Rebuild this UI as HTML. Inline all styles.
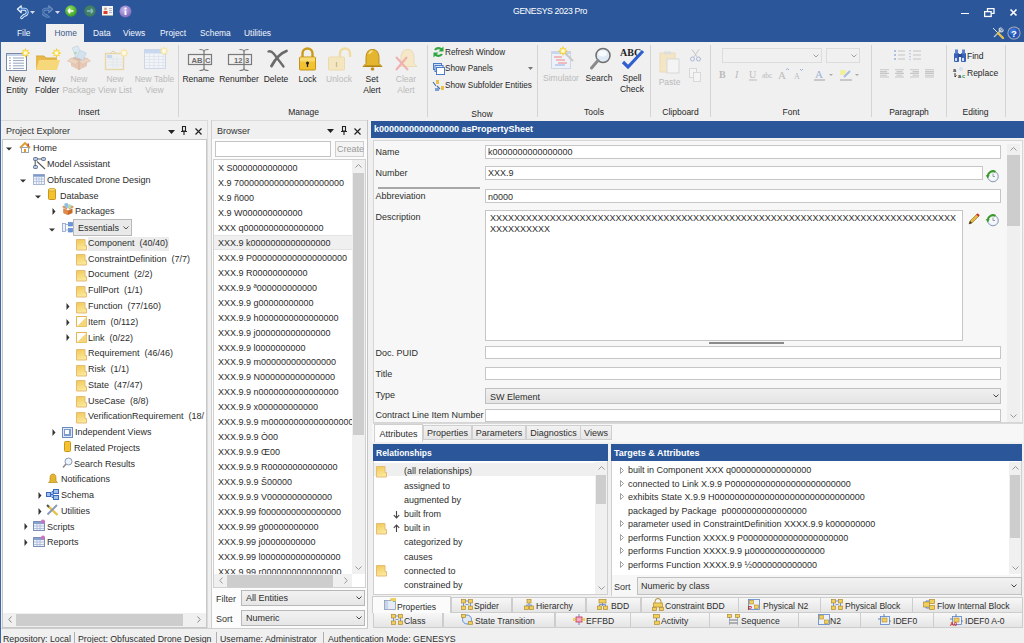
<!DOCTYPE html><html><head><meta charset='utf-8'><style>
html,body{margin:0;padding:0;}
body{width:1024px;height:643px;overflow:hidden;position:relative;background:#f0f0f0;font-family:"Liberation Sans",sans-serif;}
.t{position:absolute;white-space:nowrap;}
.b{position:absolute;}
svg.b{overflow:visible}
</style></head><body>
<div class='b' style='left:0px;top:0px;width:1024px;height:42px;background:#2b579a'></div>
<div class='t' style='left:513px;top:7.14px;font-size:8.7px;line-height:8.7px;color:#fff;letter-spacing:-0.35px'>GENESYS 2023 Pro</div>
<div class='b' style='left:961px;top:12.5px;width:7.5px;height:1.5px;background:#fff'></div>
<svg class='b' style='left:984px;top:7.5px' width='11' height='9' viewBox='0 0 11 9'><rect x='0.65' y='3.65' width='6.5' height='4.8' fill='none' stroke='#fff' stroke-width='1.3'/><path d='M3.5 3.5V0.65h6.5v4.8H7.3' fill='none' stroke='#fff' stroke-width='1.3'/></svg>
<svg class='b' style='left:1009.5px;top:8.5px' width='7' height='7' viewBox='0 0 7 7'><path d='M0.5 0.5L6.5 6.5M6.5 0.5L0.5 6.5' stroke='#fff' stroke-width='1.6'/></svg>
<svg class='b' style='left:17px;top:4.5px' width='11' height='13.5' viewBox='0 0 13 16'><path d='M3.5 5H8.5A3.6 3.6 0 0 1 8.5 12.2L5.5 15' fill='none' stroke='#e8f0fa' stroke-width='3.4' stroke-linecap='round'/><path d='M0.3 5L5 0.8V9.2Z' fill='#e8f0fa' stroke='#e8f0fa' stroke-width='1.2' stroke-linejoin='round'/><path d='M3.5 5H8.5A3.6 3.6 0 0 1 8.5 12.2L5.5 15' fill='none' stroke='#2f6fc4' stroke-width='1.5' stroke-linecap='round'/><path d='M1.6 5L4.4 2.6V7.4Z' fill='#2f6fc4'/></svg>
<svg class='b' style='left:30px;top:11px' width='5' height='3' viewBox='0 0 5 3'><path d='M0 0h5L2.5 3z' fill='#d8d8e0'/></svg>
<div class='b' style='left:42px;top:4.5px;width:11px;height:13.5px;transform:scaleX(-1);opacity:0.55'>
<svg width='11' height='13.5' viewBox='0 0 13 16' style='position:absolute;left:0;top:0'><path d='M3.5 5H8.5A3.6 3.6 0 0 1 8.5 12.2L5.5 15' fill='none' stroke='#9fb8dc' stroke-width='3.4' stroke-linecap='round'/><path d='M0.3 5L5 0.8V9.2Z' fill='#9fb8dc' stroke='#9fb8dc' stroke-width='1.2' stroke-linejoin='round'/><path d='M3.5 5H8.5A3.6 3.6 0 0 1 8.5 12.2L5.5 15' fill='none' stroke='#4a78b8' stroke-width='1.5' stroke-linecap='round'/><path d='M1.6 5L4.4 2.6V7.4Z' fill='#4a78b8'/></svg></div>
<svg class='b' style='left:55px;top:11px' width='5' height='3' viewBox='0 0 5 3'><path d='M0 0h5L2.5 3z' fill='#d8d8e0'/></svg>
<svg class='b' style='left:65px;top:5px' width='12' height='12' viewBox='0 0 12 12'><defs><radialGradient id='gg' cx='0.4' cy='0.35' r='0.7'><stop offset='0' stop-color='#9be06a'/><stop offset='1' stop-color='#2f9a1a'/></radialGradient></defs><circle cx='6' cy='6' r='5.8' fill='url(#gg)'/><path d='M3 6h5.5M3 6l2.2-2.2M3 6l2.2 2.2' stroke='#fff' stroke-width='1.5' fill='none'/></svg>
<svg class='b' style='left:84px;top:5px' width='12' height='12' viewBox='0 0 12 12'><circle cx='6' cy='6' r='5.8' fill='#3a7a5c'/><circle cx='6' cy='6' r='4.8' fill='#428266'/><path d='M3 6h5.5M9 6L6.8 3.8M9 6L6.8 8.2' stroke='#8fb8c8' stroke-width='1.3' fill='none'/></svg>
<svg class='b' style='left:102px;top:6px' width='11' height='10' viewBox='0 0 11 10'><rect x='0' y='0' width='11' height='10' fill='#f4f4f4'/><rect x='0' y='9' width='11' height='1' fill='#9aa'/><circle cx='3.5' cy='3' r='1.4' fill='#c8a080'/><rect x='1.5' y='5' width='4' height='3' fill='#e03a2a'/><path d='M7 2.5h3M7 4.5h3M7 6.5h3' stroke='#99a' stroke-width='0.7'/></svg>
<svg class='b' style='left:119px;top:5px' width='13' height='13' viewBox='0 0 13 13'><defs><radialGradient id='pg' cx='0.4' cy='0.35' r='0.7'><stop offset='0' stop-color='#c8b8ec'/><stop offset='1' stop-color='#7a64b8'/></radialGradient></defs><circle cx='6.5' cy='6.5' r='6' fill='url(#pg)'/><path d='M6.5 5.5v4.5' stroke='#fff' stroke-width='1.8'/><circle cx='6.5' cy='3.6' r='1.1' fill='#fff'/></svg>
<div class='b' style='left:46px;top:24px;width:38px;height:19px;background:#f0f0f0'></div>
<div class='t' style='left:17px;top:29.19px;font-size:8.4px;line-height:8.4px;color:#f4f6fa;'>File</div>
<div class='t' style='left:54.5px;top:29.19px;font-size:8.4px;line-height:8.4px;color:#3a5888;'>Home</div>
<div class='t' style='left:93px;top:29.19px;font-size:8.4px;line-height:8.4px;color:#f4f6fa;'>Data</div>
<div class='t' style='left:123px;top:29.19px;font-size:8.4px;line-height:8.4px;color:#f4f6fa;'>Views</div>
<div class='t' style='left:160px;top:29.19px;font-size:8.4px;line-height:8.4px;color:#f4f6fa;'>Project</div>
<div class='t' style='left:200px;top:29.19px;font-size:8.4px;line-height:8.4px;color:#f4f6fa;'>Schema</div>
<div class='t' style='left:244px;top:29.19px;font-size:8.4px;line-height:8.4px;color:#f4f6fa;'>Utilities</div>
<svg class='b' style='left:992px;top:27px' width='12' height='12' viewBox='0 0 12 12'><path d='M10.5 1.5L2 10' stroke='#b8c0cc' stroke-width='1.4'/><path d='M9.5 0.8a2 2 0 1 0 1.7 1.7' fill='none' stroke='#c8d0dc' stroke-width='1.3'/><path d='M1 1L5.5 5.5' stroke='#dfe6ee' stroke-width='1'/><path d='M6 6L11 11' stroke='#e8c24a' stroke-width='2.4' stroke-linecap='round'/></svg>
<svg class='b' style='left:1007px;top:26px' width='14' height='14' viewBox='0 0 14 14'><circle cx='7' cy='7' r='6.6' fill='#a6a9b3'/><circle cx='7' cy='7' r='5.6' fill='#2356b8'/><circle cx='6' cy='5.5' r='3.3' fill='#4d86e0' opacity='0.6'/><text x='7' y='10.6' font-size='9.5' font-weight='bold' text-anchor='middle' fill='#fff' font-family='Liberation Sans'>?</text></svg>
<div class='b' style='left:1px;top:42px;width:1023px;height:79px;background:#f0f0f0'></div>
<div class='b' style='left:0px;top:42px;width:1px;height:79px;background:#3d67ab'></div>
<div class='b' style='left:178px;top:45px;width:1px;height:72px;background:#d4d4d4'></div>
<div class='b' style='left:427px;top:45px;width:1px;height:72px;background:#d4d4d4'></div>
<div class='b' style='left:537px;top:45px;width:1px;height:72px;background:#d4d4d4'></div>
<div class='b' style='left:650px;top:45px;width:1px;height:72px;background:#d4d4d4'></div>
<div class='b' style='left:710px;top:45px;width:1px;height:72px;background:#d4d4d4'></div>
<div class='b' style='left:871px;top:45px;width:1px;height:72px;background:#d4d4d4'></div>
<div class='b' style='left:946px;top:45px;width:1px;height:72px;background:#d4d4d4'></div>
<div class='b' style='left:1005px;top:45px;width:1px;height:72px;background:#d4d4d4'></div>
<div class='t' style='left:29.00px;width:120px;text-align:center;top:108.30px;font-size:8.5px;line-height:8.5px;color:#262626;'>Insert</div>
<div class='t' style='left:243.50px;width:120px;text-align:center;top:108.30px;font-size:8.5px;line-height:8.5px;color:#262626;'>Manage</div>
<div class='t' style='left:422.00px;width:120px;text-align:center;top:110.30px;font-size:8.5px;line-height:8.5px;color:#262626;'>Show</div>
<div class='t' style='left:534.00px;width:120px;text-align:center;top:108.30px;font-size:8.5px;line-height:8.5px;color:#262626;'>Tools</div>
<div class='t' style='left:620.50px;width:120px;text-align:center;top:108.30px;font-size:8.5px;line-height:8.5px;color:#262626;'>Clipboard</div>
<div class='t' style='left:731.00px;width:120px;text-align:center;top:108.30px;font-size:8.5px;line-height:8.5px;color:#262626;'>Font</div>
<div class='t' style='left:849.00px;width:120px;text-align:center;top:108.30px;font-size:8.5px;line-height:8.5px;color:#262626;'>Paragraph</div>
<div class='t' style='left:915.50px;width:120px;text-align:center;top:108.30px;font-size:8.5px;line-height:8.5px;color:#262626;'>Editing</div>
<div class='t' style='left:-43.00px;width:120px;text-align:center;top:74.80px;font-size:8.5px;line-height:8.5px;color:#262626;'>New</div>
<div class='t' style='left:-43.00px;width:120px;text-align:center;top:85.80px;font-size:8.5px;line-height:8.5px;color:#262626;'>Entity</div>
<div class='t' style='left:-13.00px;width:120px;text-align:center;top:74.80px;font-size:8.5px;line-height:8.5px;color:#262626;'>New</div>
<div class='t' style='left:-13.00px;width:120px;text-align:center;top:85.80px;font-size:8.5px;line-height:8.5px;color:#262626;'>Folder</div>
<div class='t' style='left:19.00px;width:120px;text-align:center;top:74.80px;font-size:8.5px;line-height:8.5px;color:#bababa;'>New</div>
<div class='t' style='left:19.00px;width:120px;text-align:center;top:85.80px;font-size:8.5px;line-height:8.5px;color:#bababa;'>Package</div>
<div class='t' style='left:55.00px;width:120px;text-align:center;top:74.80px;font-size:8.5px;line-height:8.5px;color:#bababa;'>New</div>
<div class='t' style='left:55.00px;width:120px;text-align:center;top:85.80px;font-size:8.5px;line-height:8.5px;color:#bababa;'>View List</div>
<div class='t' style='left:94.50px;width:120px;text-align:center;top:74.80px;font-size:8.5px;line-height:8.5px;color:#bababa;'>New Table</div>
<div class='t' style='left:94.50px;width:120px;text-align:center;top:85.80px;font-size:8.5px;line-height:8.5px;color:#bababa;'>View</div>
<div class='t' style='left:138.50px;width:120px;text-align:center;top:74.80px;font-size:8.5px;line-height:8.5px;color:#262626;'>Rename</div>
<div class='t' style='left:179.00px;width:120px;text-align:center;top:74.80px;font-size:8.5px;line-height:8.5px;color:#262626;'>Renumber</div>
<div class='t' style='left:216.00px;width:120px;text-align:center;top:74.80px;font-size:8.5px;line-height:8.5px;color:#262626;'>Delete</div>
<div class='t' style='left:247.50px;width:120px;text-align:center;top:74.80px;font-size:8.5px;line-height:8.5px;color:#262626;'>Lock</div>
<div class='t' style='left:279.00px;width:120px;text-align:center;top:74.80px;font-size:8.5px;line-height:8.5px;color:#bababa;'>Unlock</div>
<div class='t' style='left:312.00px;width:120px;text-align:center;top:74.80px;font-size:8.5px;line-height:8.5px;color:#262626;'>Set</div>
<div class='t' style='left:312.00px;width:120px;text-align:center;top:85.80px;font-size:8.5px;line-height:8.5px;color:#262626;'>Alert</div>
<div class='t' style='left:346.00px;width:120px;text-align:center;top:74.80px;font-size:8.5px;line-height:8.5px;color:#bababa;'>Clear</div>
<div class='t' style='left:346.00px;width:120px;text-align:center;top:85.80px;font-size:8.5px;line-height:8.5px;color:#bababa;'>Alert</div>
<div class='t' style='left:501.00px;width:120px;text-align:center;top:73.60px;font-size:8.5px;line-height:8.5px;color:#bababa;'>Simulator</div>
<div class='t' style='left:539.00px;width:120px;text-align:center;top:73.60px;font-size:8.5px;line-height:8.5px;color:#262626;'>Search</div>
<div class='t' style='left:572.00px;width:120px;text-align:center;top:73.60px;font-size:8.5px;line-height:8.5px;color:#262626;'>Spell</div>
<div class='t' style='left:572.00px;width:120px;text-align:center;top:84.60px;font-size:8.5px;line-height:8.5px;color:#262626;'>Check</div>
<div class='t' style='left:609.50px;width:120px;text-align:center;top:77.50px;font-size:8.5px;line-height:8.5px;color:#bababa;'>Paste</div>
<div class='t' style='left:445px;top:48.56px;font-size:8.2px;line-height:8.2px;color:#262626;'>Refresh Window</div>
<div class='t' style='left:445px;top:65.06px;font-size:8.2px;line-height:8.2px;color:#262626;'>Show Panels</div>
<div class='t' style='left:445px;top:81.56px;font-size:8.2px;line-height:8.2px;color:#262626;'>Show Subfolder Entities</div>
<svg class='b' style='left:528px;top:67px' width='5' height='3' viewBox='0 0 5 3'><path d='M0 0h5L2.5 3z' fill='#777'/></svg>
<div class='t' style='left:967px;top:51.80px;font-size:8.5px;line-height:8.5px;color:#262626;'>Find</div>
<div class='t' style='left:967px;top:68.80px;font-size:8.5px;line-height:8.5px;color:#262626;'>Replace</div>
<svg class='b' style='left:5px;top:47px' width='24' height='26' viewBox='0 0 24 26'><rect x='1.5' y='6.5' width='20' height='17' fill='#fff' stroke='#7a8aa8'/><rect x='2' y='7' width='19' height='2' fill='#c6d3e8'/><path d='M4 11.0h2M8 11.0h11' stroke='#8a9bb8' stroke-width='0.9'/><path d='M4 13.6h2M8 13.6h11' stroke='#8a9bb8' stroke-width='0.9'/><path d='M4 16.2h2M8 16.2h11' stroke='#8a9bb8' stroke-width='0.9'/><path d='M4 18.8h2M8 18.8h11' stroke='#8a9bb8' stroke-width='0.9'/><path d='M4 21.4h2M8 21.4h11' stroke='#8a9bb8' stroke-width='0.9'/><g transform='translate(20.5,6)'><path d='M0 -5L1.2 -2.2L3.5 -3.5L2.2 -1.2L5 0L2.2 1.2L3.5 3.5L1.2 2.2L0 5L-1.2 2.2L-3.5 3.5L-2.2 1.2L-5 0L-2.2 -1.2L-3.5 -3.5L-1.2 -2.2Z' fill='#f3c81a'/><circle r='2.8' fill='#fbe36a'/><circle r='1.7' fill='#fffbe0'/></g></svg>
<svg class='b' style='left:35px;top:47px' width='26' height='26' viewBox='0 0 26 26'><path d='M1 9h8l2 2h11v12H1Z' fill='#e8b94a'/><path d='M1 23L4 13h21l-3 10Z' fill='#f6d77a'/><path d='M1 9h8l2 2h11' fill='none' stroke='#d9a83a'/><g transform='translate(21.5,6)'><path d='M0 -5L1.2 -2.2L3.5 -3.5L2.2 -1.2L5 0L2.2 1.2L3.5 3.5L1.2 2.2L0 5L-1.2 2.2L-3.5 3.5L-2.2 1.2L-5 0L-2.2 -1.2L-3.5 -3.5L-1.2 -2.2Z' fill='#f3c81a'/><circle r='2.8' fill='#fbe36a'/><circle r='1.7' fill='#fffbe0'/></g></svg>
<svg class='b' style='left:67px;top:47px' width='24' height='24' viewBox='0 0 24 24'><path d='M4 11l8 3 8-3v8l-8 4-8-4Z' fill='#e6c8b4'/><path d='M12 14v9' stroke='#d6b09a'/><path d='M4 11L0.5 14l8 3.5L12 14ZM20 11l3.5 3-8 3.5L12 14Z' fill='#ecd4c2' stroke='#dcbca8' stroke-width='0.6'/><path d='M5 11l7-3 7 3-7 3Z' fill='#d8b8a0'/><rect x='7' y='-0.5' width='6' height='11' fill='#dce8f2' stroke='#c0d0e0' stroke-width='0.6' transform='rotate(-20 10 5)'/><rect x='11' y='4' width='7' height='8' fill='#d4e2ee' stroke='#c0d0e0' stroke-width='0.6' transform='rotate(25 14 8)'/><circle cx='8.5' cy='6' r='1.2' fill='#a8d8a0'/></svg>
<svg class='b' style='left:104px;top:47px' width='24' height='24' viewBox='0 0 24 24'><rect x='1.5' y='6.5' width='18' height='16' fill='#eef0f2' stroke='#e6d6a8' stroke-width='1.4'/><path d='M4 12h14M4 15h14M4 18h14M9 9v12M13 9v12' stroke='#dfe4ea' stroke-width='0.8'/><rect x='3' y='8' width='5' height='3' fill='#c8d8ec'/><path d='M6 7l3-3 3 2' fill='none' stroke='#e0d0a0'/><g transform='translate(20,6)'><path d='M0 -5L1.2 -2.2L3.5 -3.5L2.2 -1.2L5 0L2.2 1.2L3.5 3.5L1.2 2.2L0 5L-1.2 2.2L-3.5 3.5L-2.2 1.2L-5 0L-2.2 -1.2L-3.5 -3.5L-1.2 -2.2Z' fill='#f6e09a'/><circle r='2.8' fill='#faeeb8'/><circle r='1.7' fill='#fffdf0'/></g></svg>
<svg class='b' style='left:143px;top:47px' width='25' height='24' viewBox='0 0 25 24'><rect x='1.5' y='2.5' width='21' height='19' fill='#f2f4f8' stroke='#cdd6e6'/><rect x='2' y='3' width='20' height='3.5' fill='#c8d8f0'/><path d='M2 9.5h20' stroke='#dde3ec' stroke-width='0.8'/><path d='M2 12.5h20' stroke='#dde3ec' stroke-width='0.8'/><path d='M2 15.5h20' stroke='#dde3ec' stroke-width='0.8'/><path d='M2 18.5h20' stroke='#dde3ec' stroke-width='0.8'/><path d='M6.5 6.5v15' stroke='#dde3ec' stroke-width='0.8'/><path d='M11.0 6.5v15' stroke='#dde3ec' stroke-width='0.8'/><path d='M15.5 6.5v15' stroke='#dde3ec' stroke-width='0.8'/><path d='M20.0 6.5v15' stroke='#dde3ec' stroke-width='0.8'/><g transform='translate(21,4)'><path d='M0 -5L1.2 -2.2L3.5 -3.5L2.2 -1.2L5 0L2.2 1.2L3.5 3.5L1.2 2.2L0 5L-1.2 2.2L-3.5 3.5L-2.2 1.2L-5 0L-2.2 -1.2L-3.5 -3.5L-1.2 -2.2Z' fill='#f6e09a'/><circle r='2.8' fill='#faeeb8'/><circle r='1.7' fill='#fffdf0'/></g></svg>
<svg class='b' style='left:187px;top:48px' width='26' height='24' viewBox='0 0 26 24'><rect x='1.5' y='6.5' width='23' height='10' fill='none' stroke='#7a7a7a' stroke-width='1.2'/><text x='4.5' y='14.6' font-size='7.6' font-weight='bold' fill='#6a6a6a' font-family='Liberation Sans'>AB</text><text x='18' y='14.6' font-size='7.6' font-weight='bold' fill='#6a6a6a' font-family='Liberation Sans'>C</text><path d='M17 3v18' stroke='#777' stroke-width='1.2'/><path d='M12.5 1.5Q17 1.5 17 3.5Q17 1.5 21.5 1.5M12.5 22.5Q17 22.5 17 20.5Q17 22.5 21.5 22.5' fill='none' stroke='#777' stroke-width='1.1'/></svg>
<svg class='b' style='left:227px;top:48px' width='26' height='24' viewBox='0 0 26 24'><rect x='1.5' y='6.5' width='23' height='10' fill='none' stroke='#7a7a7a' stroke-width='1.2'/><text x='7' y='14.6' font-size='7.6' font-weight='bold' fill='#6a6a6a' font-family='Liberation Sans'>12</text><text x='18' y='14.6' font-size='7.6' font-weight='bold' fill='#6a6a6a' font-family='Liberation Sans'>3</text><path d='M17 3v18' stroke='#777' stroke-width='1.2'/><path d='M12.5 1.5Q17 1.5 17 3.5Q17 1.5 21.5 1.5M12.5 22.5Q17 22.5 17 20.5Q17 22.5 21.5 22.5' fill='none' stroke='#777' stroke-width='1.1'/></svg>
<svg class='b' style='left:266px;top:48px' width='23' height='22' viewBox='0 0 23 22'><path d='M2.5 3.5Q5 2.5 8 6L17.5 18.5' fill='none' stroke='#6a6a6a' stroke-width='2.3' stroke-linecap='round'/><path d='M20.5 3Q12 6 5.5 18' fill='none' stroke='#6a6a6a' stroke-width='2.8' stroke-linecap='round'/></svg>
<svg class='b' style='left:298px;top:47px' width='19' height='24' viewBox='0 0 19 24'><path d='M4.5 11V6.5a5 5 0 0 1 10 0V11' fill='none' stroke='#c99a1c' stroke-width='2.4'/><rect x='1.5' y='10' width='16' height='13' rx='1' fill='#f2c230' stroke='#c5931a'/><rect x='2' y='10.5' width='15' height='4' fill='#f8da70'/><circle cx='9.5' cy='16' r='1.5' fill='#222'/><path d='M9.5 16v4' stroke='#222' stroke-width='1.3'/></svg>
<svg class='b' style='left:327px;top:47px' width='25' height='24' viewBox='0 0 25 24'><path d='M13 11V6.5a5 5 0 0 1 10 0V10' fill='none' stroke='#f0dca0' stroke-width='2.4'/><rect x='1.5' y='10' width='16' height='13' rx='1' fill='#f4e6c0' stroke='#eedaa8'/><path d='M9.5 15v5' stroke='#cbbb90' stroke-width='1.3'/></svg>
<svg class='b' style='left:362px;top:48px' width='21' height='23' viewBox='0 0 21 23'><path d='M10.5 1.5c-5 0-6.5 4-6.5 9v5l-3 3h19l-3-3v-5c0-5-1.5-9-6.5-9Z' fill='#e4b52e' stroke='#b98b18'/><path d='M7 6c1-2 2-3 3.5-3' stroke='#fbe79a' stroke-width='1.5' fill='none'/><path d='M3 18h15' stroke='#a67b10'/><circle cx='10.5' cy='21' r='1.8' fill='#c09020'/></svg>
<svg class='b' style='left:394px;top:48px' width='24' height='24' viewBox='0 0 24 24'><path d='M13.5 1.5c-5 0-6.5 4-6.5 9v5l-3 3h19l-3-3v-5c0-5-1.5-9-6.5-9Z' fill='#f4e8c8' stroke='#eadcb8'/><path d='M2 9l12 13M13 9L2 22' stroke='#f0b0b0' stroke-width='2'/></svg>
<svg class='b' style='left:433px;top:46px' width='11' height='12' viewBox='0 0 11 12'><path d='M9.5 4.5A4.3 4.3 0 0 0 2 4' fill='none' stroke='#2fa642' stroke-width='2.2'/><path d='M1.5 7.5A4.3 4.3 0 0 0 9 8' fill='none' stroke='#2fa642' stroke-width='2.2'/><path d='M10.5 0.5V5.5H5.5Z' fill='#2fa642'/><path d='M0.5 11.5V6.5H5.5Z' fill='#2fa642'/></svg>
<svg class='b' style='left:433px;top:63px' width='12' height='12' viewBox='0 0 12 12'><rect x='0.5' y='0.5' width='8' height='6' fill='#cfe0f6' stroke='#4a7ac8'/><rect x='2' y='2.5' width='8' height='6' fill='#dce9fa' stroke='#4a7ac8'/><rect x='3.5' y='4.5' width='8' height='7' fill='#fff' stroke='#4a7ac8'/></svg>
<svg class='b' style='left:432px;top:80px' width='13' height='12' viewBox='0 0 13 12'><path d='M1 2l3 4M5 6l3 3' stroke='#4a6fb0' stroke-width='1.2'/><rect x='4' y='0' width='3' height='4' fill='#e8c04a'/><rect x='9' y='6' width='3' height='4' fill='#e8c04a'/><rect x='3' y='8' width='4' height='3' fill='#7aa0d8'/></svg>
<svg class='b' style='left:550px;top:47px' width='25' height='24' viewBox='0 0 25 24'><rect x='1.5' y='4.5' width='19' height='17' fill='#eef2f8' stroke='#cdd6e6'/><rect x='2' y='5' width='18' height='2' fill='#c8d6ec'/><path d='M4 10h8M6 13h9M8 16h9' stroke='#f0a8a8' stroke-width='1.3'/><path d='M5 18h10' stroke='#a8c0ec' stroke-width='1.3'/><path d='M15 6l8 8' stroke='#c8c8c8' stroke-width='2'/><g transform='translate(13,4)'><path d='M0 -5L1.2 -2.2L3.5 -3.5L2.2 -1.2L5 0L2.2 1.2L3.5 3.5L1.2 2.2L0 5L-1.2 2.2L-3.5 3.5L-2.2 1.2L-5 0L-2.2 -1.2L-3.5 -3.5L-1.2 -2.2Z' fill='#f3c81a'/><circle r='2.8' fill='#fbe36a'/><circle r='1.7' fill='#fffbe0'/></g></svg>
<svg class='b' style='left:589px;top:47px' width='23' height='25' viewBox='0 0 23 25'><circle cx='14' cy='8.5' r='7' fill='#dfeaf6' stroke='#6e6e6e' stroke-width='1.5'/><ellipse cx='13.5' cy='6.5' rx='4.5' ry='3' fill='#fff' opacity='0.75'/><path d='M9 13.5L2.5 21' stroke='#8a8a8a' stroke-width='3' stroke-linecap='round'/></svg>
<svg class='b' style='left:619px;top:46px' width='26' height='25' viewBox='0 0 26 25'><text x='1' y='10' font-size='10' font-weight='bold' fill='#222' font-family='Liberation Serif'>ABC</text><path d='M4 16l5 5L24 5' fill='none' stroke='#2f5fcf' stroke-width='3.2'/></svg>
<svg class='b' style='left:659px;top:51px' width='22' height='23' viewBox='0 0 22 23'><rect x='1' y='2' width='15' height='19' fill='#f4e6c4' stroke='#ecdcb8'/><rect x='5' y='0.5' width='7' height='3' fill='#ddd'/><rect x='8' y='8' width='12' height='14' fill='#f4f4f4' stroke='#d8d8d8'/></svg>
<svg class='b' style='left:690px;top:49px' width='11' height='13' viewBox='0 0 11 13'><circle cx='2.5' cy='10' r='2' fill='none' stroke='#a8b8d8'/><circle cx='8.5' cy='10' r='2' fill='none' stroke='#a8b8d8'/><path d='M3.5 8.5L9 0.5M7.5 8.5L2 0.5' stroke='#c4c4c4'/></svg>
<svg class='b' style='left:689px;top:68px' width='13' height='14' viewBox='0 0 13 14'><rect x='0.5' y='0.5' width='7' height='9' fill='#f4f4f4' stroke='#d8d8d8'/><rect x='4.5' y='4.5' width='7' height='9' fill='#f4f4f4' stroke='#d8d8d8'/></svg>
<div class='b' style='left:722px;top:48px;width:100px;height:15px;border:1px solid #dcdcdc;box-sizing:border-box;background:#f0f0f0'></div>
<div class='b' style='left:826px;top:48px;width:34px;height:15px;border:1px solid #dcdcdc;box-sizing:border-box;background:#f0f0f0'></div>
<svg class='b' style='left:813px;top:54px' width='6' height='4' viewBox='0 0 6 4'><path d='M0.5 0.5L3 3L5.5 0.5' fill='none' stroke='#a0a0a0'/></svg>
<svg class='b' style='left:851px;top:54px' width='6' height='4' viewBox='0 0 6 4'><path d='M0.5 0.5L3 3L5.5 0.5' fill='none' stroke='#a0a0a0'/></svg>
<svg class='b' style='left:718px;top:68px' width='140' height='14' viewBox='0 0 140 14'><text x='1' y='10' font-size='10' font-weight='bold' fill='#bbb' font-family='Liberation Serif'>B</text><text x='17' y='10' font-size='10' font-style='italic' fill='#bbb' font-family='Liberation Serif'>I</text><text x='31' y='10' font-size='10' fill='#bbb' font-family='Liberation Serif'>U</text><path d='M31 12h8' stroke='#bbb'/><text x='44' y='10' font-size='7.5' fill='#bbb' font-family='Liberation Serif'>abc</text><text x='60' y='11' font-size='11' fill='#bbb' font-family='Liberation Serif'>A</text><path d='M68 2l1.5 -1.5L71 2' stroke='#9bb0d8' fill='none'/><text x='76' y='11' font-size='8' fill='#bbb' font-family='Liberation Serif'>A</text><path d='M82 1l1.5 1.5L85 1' stroke='#9bb0d8' fill='none'/><text x='97' y='10' font-size='11' fill='#9fb0d6' font-family='Liberation Serif'>A</text><rect x='96' y='11' width='11' height='2' fill='#c8c8c8'/><path d='M111 6h4l-2 2z' fill='#aaa'/><rect x='122' y='2' width='6' height='5' fill='#f0f0a0'/><path d='M126 9l6-6' stroke='#a8bce0' stroke-width='2'/><rect x='122' y='11' width='12' height='2' fill='#c8c8c8'/><path d='M137 6h4l-2 2z' fill='#aaa'/></svg>
<svg class='b' style='left:893px;top:49px' width='30' height='13' viewBox='0 0 30 13'><g fill='#9ab0dc'><circle cx='2' cy='2' r='1'/><circle cx='2' cy='6' r='1'/><circle cx='2' cy='10' r='1'/></g><path d='M5 2h7M5 6h7M5 10h7M20 2h8M20 6h8M20 10h8' stroke='#c4c4c4' stroke-width='1.2'/><path d='M17 1v10' stroke='#9ab0dc' stroke-dasharray='1.5 1.5'/></svg>
<svg class='b' style='left:879px;top:68.5px' width='58' height='10' viewBox='0 0 58 10'><path d='M1 0.8H10M1 2.6H8M1 4.4H10M1 6.2H8M1 8.0H10M16 0.8H25M17.5 2.6H23.5M16 4.4H25M17.5 6.2H23.5M16 8.0H25M31 0.8H40M33.5 2.6H40M31 4.4H40M33.5 6.2H40M31 8.0H40M46 0.8H55M46 2.6H55M46 4.4H55M46 6.2H55M46 8.0H55' stroke='#c6c6c6' stroke-width='1.1'/></svg>
<svg class='b' style='left:953px;top:49px' width='14' height='13' viewBox='0 0 14 13'><rect x='1' y='4' width='5' height='9' rx='1' fill='#3a62b8'/><rect x='8' y='4' width='5' height='9' rx='1' fill='#3a62b8'/><rect x='2' y='0.5' width='3' height='4' fill='#5a82d0'/><rect x='9' y='0.5' width='3' height='4' fill='#5a82d0'/><rect x='5' y='5' width='4' height='3' fill='#2a4a98'/><rect x='2' y='9' width='2' height='3' fill='#cfe0ff'/><rect x='9' y='9' width='2' height='3' fill='#cfe0ff'/></svg>
<svg class='b' style='left:953px;top:66px' width='14' height='13' viewBox='0 0 14 13'><text x='0' y='6' font-size='5.5' font-weight='bold' fill='#333' font-family='Liberation Sans'>a</text><path d='M2 7v4l1.5-1.5' stroke='#333' fill='none'/><text x='5' y='12' font-size='5.5' font-weight='bold' fill='#333' font-family='Liberation Sans'>a</text><text x='9' y='12' font-size='5.5' font-weight='bold' fill='#2a9a3a' font-family='Liberation Sans'>c</text><circle cx='8' cy='3' r='2' fill='#d8e0ea'/></svg>
<div class='b' style='left:0px;top:121px;width:1024px;height:510px;background:#f0f0f0'></div>
<div class='b' style='left:0px;top:121px;width:1px;height:522px;background:#3d67ab'></div>
<div class='b' style='left:1px;top:628px;width:366px;height:1.2px;background:#cfcfcf'></div>
<div class='b' style='left:1px;top:120px;width:207px;height:1px;background:#dadada'></div>
<div class='b' style='left:207px;top:120px;width:1px;height:508px;background:#dadada'></div>
<div class='b' style='left:2px;top:139px;width:205px;height:489px;background:#fff;border:1px solid #c8c8c8;box-sizing:border-box'></div>
<div class='t' style='left:6px;top:126.88px;font-size:9px;line-height:9px;color:#333;'>Project Explorer</div>
<svg class='b' style='left:168px;top:130px' width='7' height='4' viewBox='0 0 7 4'><path d='M0 0h7L3.5 4z' fill='#222'/></svg>
<svg class='b' style='left:181px;top:126px' width='6' height='9' viewBox='0 0 6 9'><path d='M1.5 0.5h3v4.5h-3z' fill='none' stroke='#222' stroke-width='1.1'/><path d='M0 5.5h6M3 5.5v3.5' stroke='#222' stroke-width='1.1'/></svg>
<svg class='b' style='left:194.5px;top:127.5px' width='7' height='7' viewBox='0 0 7 7'><path d='M0.5 0.5L6.5 6.5M6.5 0.5L0.5 6.5' stroke='#222' stroke-width='1.2'/></svg>
<svg width='0' height='0' style='position:absolute'><defs><linearGradient id='fg' x1='0' y1='0' x2='0.3' y2='1'><stop offset='0' stop-color='#f0c855'/><stop offset='1' stop-color='#fbe89a'/></linearGradient></defs></svg>
<svg class='b' style='left:6px;top:147.3px' width='6' height='4' viewBox='0 0 6 4'><path d='M0 0.5h6L3 3.5z' fill='#333'/></svg>
<svg class='b' style='left:19px;top:142px' width='12' height='11' viewBox='0 0 12 11'><path d='M1 6L6 1l5 5' fill='none' stroke='#e09a2a' stroke-width='1.8'/><rect x='2.5' y='5.5' width='7' height='5' fill='#fff' stroke='#9aa4b8'/><rect x='5' y='7' width='2' height='3.5' fill='#e09a2a'/><rect x='8.5' y='1.5' width='1.5' height='3' fill='#c44'/></svg>
<div class='t' style='left:33px;top:144.38px;font-size:9px;line-height:9px;color:#2d2d2d;'>Home</div>
<svg class='b' style='left:33px;top:157px' width='13' height='13' viewBox='0 0 13 13'><path d='M2.5 2h7M2.2 2v8M4 4.5l8 7.5' stroke='#5a5a5a' stroke-width='1.1' fill='none'/><rect x='0.5' y='0.5' width='4' height='3' rx='1' fill='#b4c6e4' stroke='#4a5a78' stroke-width='0.8'/><rect x='8.5' y='0.5' width='4' height='3' rx='1' fill='#b4c6e4' stroke='#4a5a78' stroke-width='0.8'/><rect x='0.5' y='8.5' width='4' height='3' rx='1' fill='#b4c6e4' stroke='#4a5a78' stroke-width='0.8'/></svg>
<div class='t' style='left:47px;top:160.14px;font-size:9px;line-height:9px;color:#2d2d2d;'>Model Assistant</div>
<svg class='b' style='left:20px;top:178.82000000000002px' width='6' height='4' viewBox='0 0 6 4'><path d='M0 0.5h6L3 3.5z' fill='#333'/></svg>
<svg class='b' style='left:33px;top:174px' width='12' height='11' viewBox='0 0 12 11'><rect x='0.5' y='0.5' width='11' height='10' fill='#f0f4fa' stroke='#a0b0d0' stroke-width='0.9'/><rect x='0.5' y='0.5' width='11' height='2.2' fill='#7d98cc'/><path d='M1 5h10M1 7.5h10M3.5 2.5v8M6 2.5v8M8.5 2.5v8' stroke='#a8b8d8' stroke-width='0.7'/></svg>
<div class='t' style='left:47px;top:175.90px;font-size:9px;line-height:9px;color:#2d2d2d;'>Obfuscated Drone Design</div>
<svg class='b' style='left:35px;top:194.58px' width='6' height='4' viewBox='0 0 6 4'><path d='M0 0.5h6L3 3.5z' fill='#333'/></svg>
<svg class='b' style='left:48px;top:188px' width='8' height='12' viewBox='0 0 8 12'><rect x='0.5' y='1' width='7' height='10.5' rx='1' fill='#f2c230' stroke='#c9961a'/><ellipse cx='4' cy='1.8' rx='3.5' ry='1.3' fill='#f8dc70' stroke='#c9961a' stroke-width='0.6'/></svg>
<div class='t' style='left:60px;top:191.66px;font-size:9px;line-height:9px;color:#2d2d2d;'>Database</div>
<svg class='b' style='left:52px;top:208.23999999999998px' width='4' height='7' viewBox='0 0 4 7'><path d='M0.5 0v7L3.5 3.5z' fill='#333'/></svg>
<svg class='b' style='left:62px;top:203px' width='12' height='12' viewBox='0 0 12 12'><path d='M1.5 5.5l4.5 2 4.5-2v4.5l-4.5 2-4.5-2z' fill='#c8682a'/><path d='M1.5 5.5l4.5 2v4.5l-4.5-2z' fill='#e08a4a'/><path d='M0 4l2-1.5 4 2-1.5 2z' fill='#d8905a'/><path d='M12 4l-2-1.5-4 2 1.5 2z' fill='#d8905a'/><rect x='3' y='0' width='3.5' height='5' fill='#8ac0e8' transform='rotate(-20 5 3)'/><rect x='6' y='1.5' width='3.5' height='4' fill='#b8d8b0' transform='rotate(15 8 3)'/></svg>
<div class='t' style='left:75px;top:207.42px;font-size:9px;line-height:9px;color:#2d2d2d;'>Packages</div>
<svg class='b' style='left:49px;top:227.5px' width='6' height='4' viewBox='0 0 6 4'><path d='M0 0.5h6L3 3.5z' fill='#333'/></svg>
<svg class='b' style='left:62px;top:222px' width='11' height='11' viewBox='0 0 11 11'><rect x='0.5' y='1.5' width='3' height='8' fill='#eef2f8' stroke='#8aa4d0' stroke-width='0.8'/><rect x='6.5' y='0.5' width='4' height='3.5' fill='#6a98e0' stroke='#4a78c0' stroke-width='0.6'/><rect x='6.5' y='6.5' width='4' height='3.5' fill='#6a98e0' stroke='#4a78c0' stroke-width='0.6'/><path d='M3.5 2.5h3M3.5 8h3' stroke='#8aa4d0' stroke-width='0.8'/></svg>
<div class='b' style='left:73px;top:219px;width:59px;height:17px;background:#e9e9e9;border:1px solid #b8b8b8;box-sizing:border-box'></div>
<div class='t' style='left:78px;top:224.08px;font-size:9px;line-height:9px;color:#2d2d2d;'>Essentials</div>
<svg class='b' style='left:123px;top:226px' width='6' height='4' viewBox='0 0 6 4'><path d='M0.5 0.5L3 3L5.5 0.5' fill='none' stroke='#555'/></svg>
<div class='b' style='left:88px;top:237px;width:81px;height:14px;background:#ececec'></div>
<svg class='b' style='left:76px;top:238.56px' width='11' height='12' viewBox='0 0 11 12'><path d='M0.5 0.5h8.5v6h1.5a1 1 0 0 1 0 0v4.5h-10z' fill='url(#fg)' stroke='#e6bb78'/></svg>
<div class='t' style='left:88px;top:238.94px;font-size:9px;line-height:9px;color:#2d2d2d;'>Component&nbsp;&nbsp;(40/40)</div>
<svg class='b' style='left:76px;top:254.32px' width='11' height='12' viewBox='0 0 11 12'><path d='M0.5 0.5h8.5v6h1.5a1 1 0 0 1 0 0v4.5h-10z' fill='url(#fg)' stroke='#e6bb78'/></svg>
<div class='t' style='left:88px;top:254.70px;font-size:9px;line-height:9px;color:#2d2d2d;'>ConstraintDefinition&nbsp;&nbsp;(7/7)</div>
<svg class='b' style='left:76px;top:270.08px' width='11' height='12' viewBox='0 0 11 12'><path d='M0.5 0.5h8.5v6h1.5a1 1 0 0 1 0 0v4.5h-10z' fill='url(#fg)' stroke='#e6bb78'/></svg>
<div class='t' style='left:88px;top:270.46px;font-size:9px;line-height:9px;color:#2d2d2d;'>Document&nbsp;&nbsp;(2/2)</div>
<svg class='b' style='left:76px;top:285.84000000000003px' width='11' height='12' viewBox='0 0 11 12'><path d='M0.5 0.5h8.5v6h1.5a1 1 0 0 1 0 0v4.5h-10z' fill='url(#fg)' stroke='#e6bb78'/></svg>
<div class='t' style='left:88px;top:286.22px;font-size:9px;line-height:9px;color:#2d2d2d;'>FullPort&nbsp;&nbsp;(1/1)</div>
<svg class='b' style='left:66px;top:302.8px' width='4' height='7' viewBox='0 0 4 7'><path d='M0.5 0v7L3.5 3.5z' fill='#333'/></svg>
<svg class='b' style='left:76px;top:301.6px' width='11' height='12' viewBox='0 0 11 12'><path d='M0.5 0.5h8.5v6h1.5a1 1 0 0 1 0 0v4.5h-10z' fill='url(#fg)' stroke='#e6bb78'/></svg>
<div class='t' style='left:88px;top:301.98px;font-size:9px;line-height:9px;color:#2d2d2d;'>Function&nbsp;&nbsp;(77/160)</div>
<svg class='b' style='left:66px;top:318.56px' width='4' height='7' viewBox='0 0 4 7'><path d='M0.5 0v7L3.5 3.5z' fill='#333'/></svg>
<svg class='b' style='left:76px;top:316.36px' width='11' height='11' viewBox='0 0 11 11'><path d='M0.5 0.5h10v10h-10z' fill='#fff' stroke='#e3b54a'/><path d='M1 10.5L10.5 1V10.5z' fill='#f6d67a'/></svg>
<div class='t' style='left:88px;top:317.74px;font-size:9px;line-height:9px;color:#2d2d2d;'>Item&nbsp;&nbsp;(0/112)</div>
<svg class='b' style='left:66px;top:334.32px' width='4' height='7' viewBox='0 0 4 7'><path d='M0.5 0v7L3.5 3.5z' fill='#333'/></svg>
<svg class='b' style='left:76px;top:332.12px' width='11' height='11' viewBox='0 0 11 11'><path d='M0.5 0.5h10v10h-10z' fill='#fff' stroke='#e3b54a'/><path d='M1 10.5L10.5 1V10.5z' fill='#f6d67a'/></svg>
<div class='t' style='left:88px;top:333.50px;font-size:9px;line-height:9px;color:#2d2d2d;'>Link&nbsp;&nbsp;(0/22)</div>
<svg class='b' style='left:76px;top:348.88px' width='11' height='12' viewBox='0 0 11 12'><path d='M0.5 0.5h8.5v6h1.5a1 1 0 0 1 0 0v4.5h-10z' fill='url(#fg)' stroke='#e6bb78'/></svg>
<div class='t' style='left:88px;top:349.26px;font-size:9px;line-height:9px;color:#2d2d2d;'>Requirement&nbsp;&nbsp;(46/46)</div>
<svg class='b' style='left:76px;top:364.64px' width='11' height='12' viewBox='0 0 11 12'><path d='M0.5 0.5h8.5v6h1.5a1 1 0 0 1 0 0v4.5h-10z' fill='url(#fg)' stroke='#e6bb78'/></svg>
<div class='t' style='left:88px;top:365.02px;font-size:9px;line-height:9px;color:#2d2d2d;'>Risk&nbsp;&nbsp;(1/1)</div>
<svg class='b' style='left:76px;top:380.4px' width='11' height='12' viewBox='0 0 11 12'><path d='M0.5 0.5h8.5v6h1.5a1 1 0 0 1 0 0v4.5h-10z' fill='url(#fg)' stroke='#e6bb78'/></svg>
<div class='t' style='left:88px;top:380.78px;font-size:9px;line-height:9px;color:#2d2d2d;'>State&nbsp;&nbsp;(47/47)</div>
<svg class='b' style='left:76px;top:396.15999999999997px' width='11' height='12' viewBox='0 0 11 12'><path d='M0.5 0.5h8.5v6h1.5a1 1 0 0 1 0 0v4.5h-10z' fill='url(#fg)' stroke='#e6bb78'/></svg>
<div class='t' style='left:88px;top:396.54px;font-size:9px;line-height:9px;color:#2d2d2d;'>UseCase&nbsp;&nbsp;(8/8)</div>
<svg class='b' style='left:76px;top:411.92px' width='11' height='12' viewBox='0 0 11 12'><path d='M0.5 0.5h8.5v6h1.5a1 1 0 0 1 0 0v4.5h-10z' fill='url(#fg)' stroke='#e6bb78'/></svg>
<div class='t' style='left:88px;top:412.30px;font-size:9px;line-height:9px;color:#2d2d2d;'>VerificationRequirement&nbsp;&nbsp;(18/</div>
<svg class='b' style='left:52px;top:428.88px' width='4' height='7' viewBox='0 0 4 7'><path d='M0.5 0v7L3.5 3.5z' fill='#333'/></svg>
<svg class='b' style='left:62px;top:426.68px' width='11' height='11' viewBox='0 0 11 11'><rect x='0.5' y='0.5' width='10' height='10' fill='#dfe8f6' stroke='#6a8ac0'/><rect x='2' y='2' width='7' height='7' fill='#7a9ad0'/><rect x='3' y='3' width='4' height='4' fill='#fff'/></svg>
<div class='t' style='left:75px;top:428.06px;font-size:9px;line-height:9px;color:#2d2d2d;'>Independent Views</div>
<svg class='b' style='left:64px;top:441.44px' width='7' height='11' viewBox='0 0 7 11'><rect x='0.5' y='0.5' width='6' height='10' rx='1' fill='#f2c230' stroke='#c9961a'/></svg>
<div class='t' style='left:74px;top:443.82px;font-size:9px;line-height:9px;color:#2d2d2d;'>Related Projects</div>
<svg class='b' style='left:62px;top:457.2px' width='11' height='11' viewBox='0 0 11 11'><circle cx='6.5' cy='4.5' r='3.5' fill='#eef4fc' stroke='#8a9ab8'/><path d='M4 7l-3 3.5' stroke='#8a8a8a' stroke-width='1.5'/></svg>
<div class='t' style='left:74px;top:459.58px;font-size:9px;line-height:9px;color:#2d2d2d;'>Search Results</div>
<svg class='b' style='left:48px;top:472.96px' width='10' height='11' viewBox='0 0 10 11'><path d='M5 1c-2.5 0-3 2-3 4.5v2.5l-1.5 1.5h9l-1.5-1.5v-2.5c0-2.5-.5-4.5-3-4.5z' fill='#e4b52e' stroke='#b98b18' stroke-width='0.7'/></svg>
<div class='t' style='left:61px;top:475.34px;font-size:9px;line-height:9px;color:#2d2d2d;'>Notifications</div>
<svg class='b' style='left:38px;top:491.91999999999996px' width='4' height='7' viewBox='0 0 4 7'><path d='M0.5 0v7L3.5 3.5z' fill='#333'/></svg>
<svg class='b' style='left:46px;top:488.71999999999997px' width='13' height='11' viewBox='0 0 13 11'><rect x='0.5' y='3.5' width='4' height='4' fill='#9fc0ec' stroke='#3a6ac0'/><rect x='7.5' y='0.5' width='5' height='4' fill='#9fc0ec' stroke='#3a6ac0'/><rect x='7.5' y='6.5' width='5' height='4' fill='#9fc0ec' stroke='#3a6ac0'/><path d='M4.5 5.5h3M6 2.5v6h1.5M6 2.5h1.5' stroke='#3a6ac0' fill='none'/></svg>
<div class='t' style='left:61px;top:491.10px;font-size:9px;line-height:9px;color:#2d2d2d;'>Schema</div>
<svg class='b' style='left:38px;top:507.68px' width='4' height='7' viewBox='0 0 4 7'><path d='M0.5 0v7L3.5 3.5z' fill='#333'/></svg>
<svg class='b' style='left:46px;top:504.48px' width='13' height='12' viewBox='0 0 13 12'><path d='M1.5 1.5L11.5 11' stroke='#e8c04a' stroke-width='2.4'/><path d='M11 1L1.5 10.5' stroke='#8a9ab8' stroke-width='2'/><path d='M1 1l2 2' stroke='#555' stroke-width='2'/></svg>
<div class='t' style='left:61px;top:506.86px;font-size:9px;line-height:9px;color:#2d2d2d;'>Utilities</div>
<svg class='b' style='left:24px;top:523.44px' width='4' height='7' viewBox='0 0 4 7'><path d='M0.5 0v7L3.5 3.5z' fill='#333'/></svg>
<svg class='b' style='left:33px;top:519.24px' width='12' height='12' viewBox='0 0 12 12'><rect x='0.5' y='2.5' width='11' height='9' fill='#eef2fa' stroke='#7b8fb8'/><rect x='1' y='3' width='10' height='2' fill='#8aa0cc'/><path d='M1 7h10M1 9.5h10M4 5v6M7 5v6' stroke='#9fb0d2' stroke-width='0.7'/><circle cx='10' cy='2.5' r='2' fill='#d070c0'/></svg>
<div class='t' style='left:47px;top:522.62px;font-size:9px;line-height:9px;color:#2d2d2d;'>Scripts</div>
<svg class='b' style='left:24px;top:539.2px' width='4' height='7' viewBox='0 0 4 7'><path d='M0.5 0v7L3.5 3.5z' fill='#333'/></svg>
<svg class='b' style='left:33px;top:535.0px' width='12' height='12' viewBox='0 0 12 12'><rect x='0.5' y='2.5' width='11' height='9' fill='#eef2fa' stroke='#7b8fb8'/><rect x='1' y='3' width='10' height='2' fill='#8aa0cc'/><path d='M1 7h10M1 9.5h10M4 5v6M7 5v6' stroke='#9fb0d2' stroke-width='0.7'/><circle cx='10' cy='2.5' r='2' fill='#d070c0'/></svg>
<div class='t' style='left:47px;top:538.38px;font-size:9px;line-height:9px;color:#2d2d2d;'>Reports</div>
<div class='b' style='left:3px;top:613px;width:203px;height:14px;background:#f0f0f0'></div>
<div class='b' style='left:16px;top:614px;width:167px;height:12px;background:#cdcdcd'></div>
<svg class='b' style='left:8px;top:616px' width='4' height='7' viewBox='0 0 4 7'><path d='M3.5 0.5L0.8 3.5L3.5 6.5' fill='none' stroke='#888'/></svg>
<svg class='b' style='left:197px;top:616px' width='4' height='7' viewBox='0 0 4 7'><path d='M0.5 0.5L3.2 3.5L0.5 6.5' fill='none' stroke='#888'/></svg>
<div class='b' style='left:211px;top:120px;width:157px;height:1px;background:#dadada'></div>
<div class='b' style='left:212px;top:139px;width:155px;height:489px;background:#fcfcfc'></div>
<div class='b' style='left:211px;top:120px;width:1px;height:509px;background:#cfcfcf'></div>
<div class='b' style='left:367px;top:120px;width:1px;height:509px;background:#c4c4c4'></div>
<div class='b' style='left:211px;top:628px;width:157px;height:1px;background:#cfcfcf'></div>
<div class='t' style='left:217px;top:127.38px;font-size:9px;line-height:9px;color:#333;'>Browser</div>
<svg class='b' style='left:327px;top:129px' width='7' height='4' viewBox='0 0 7 4'><path d='M0 0h7L3.5 4z' fill='#222'/></svg>
<svg class='b' style='left:341px;top:126px' width='6' height='9' viewBox='0 0 6 9'><path d='M1.5 0.5h3v4.5h-3z' fill='none' stroke='#222' stroke-width='1.1'/><path d='M0 5.5h6M3 5.5v3.5' stroke='#222' stroke-width='1.1'/></svg>
<svg class='b' style='left:353.5px;top:127.5px' width='7' height='7' viewBox='0 0 7 7'><path d='M0.5 0.5L6.5 6.5M6.5 0.5L0.5 6.5' stroke='#222' stroke-width='1.2'/></svg>
<div class='b' style='left:215px;top:141px;width:116px;height:16px;background:#fff;border:1px solid #c4c4c4;box-sizing:border-box'></div>
<div class='b' style='left:335px;top:141px;width:29px;height:16px;background:#f4f4f4;border:1px solid #cfcfcf;box-sizing:border-box'></div>
<div class='t' style='left:337px;top:144.88px;font-size:9px;line-height:9px;color:#9a9a9a;'>Create</div>
<div class='b' style='left:213px;top:159px;width:153px;height:429px;background:#fff;border:1px solid #d0d0d0;box-sizing:border-box'></div>
<div class='b' style='left:214px;top:235px;width:138px;height:15px;background:#f0f0f0;border-top:1px solid #e4e4e4;border-bottom:1px solid #e4e4e4;box-sizing:border-box'></div>
<div class='b' style='left:214px;top:160px;width:138px;height:414px;overflow:hidden'>
<div class='t' style='left:4px;top:3.88px;font-size:9px;line-height:9px;color:#2d2d2d'>X S0000000000000</div>
<div class='t' style='left:4px;top:18.85px;font-size:9px;line-height:9px;color:#2d2d2d'>X.9 7000000000000000000000</div>
<div class='t' style='left:4px;top:33.82px;font-size:9px;line-height:9px;color:#2d2d2d'>X.9 ñ000</div>
<div class='t' style='left:4px;top:48.79px;font-size:9px;line-height:9px;color:#2d2d2d'>X.9 W000000000000</div>
<div class='t' style='left:4px;top:63.76px;font-size:9px;line-height:9px;color:#2d2d2d'>XXX q0000000000000000</div>
<div class='t' style='left:4px;top:78.73px;font-size:9px;line-height:9px;color:#2d2d2d'>XXX.9 k0000000000000000</div>
<div class='t' style='left:4px;top:93.70px;font-size:9px;line-height:9px;color:#2d2d2d'>XXX.9 P0000000000000000000</div>
<div class='t' style='left:4px;top:108.67px;font-size:9px;line-height:9px;color:#2d2d2d'>XXX.9 R00000000000</div>
<div class='t' style='left:4px;top:123.64px;font-size:9px;line-height:9px;color:#2d2d2d'>XXX.9.9 ª000000000000</div>
<div class='t' style='left:4px;top:138.61px;font-size:9px;line-height:9px;color:#2d2d2d'>XXX.9.9 g00000000000</div>
<div class='t' style='left:4px;top:153.58px;font-size:9px;line-height:9px;color:#2d2d2d'>XXX.9.9 h0000000000000000</div>
<div class='t' style='left:4px;top:168.55px;font-size:9px;line-height:9px;color:#2d2d2d'>XXX.9.9 j000000000000000</div>
<div class='t' style='left:4px;top:183.52px;font-size:9px;line-height:9px;color:#2d2d2d'>XXX.9.9 l0000000000</div>
<div class='t' style='left:4px;top:198.49px;font-size:9px;line-height:9px;color:#2d2d2d'>XXX.9.9 m000000000000000</div>
<div class='t' style='left:4px;top:213.46px;font-size:9px;line-height:9px;color:#2d2d2d'>XXX.9.9 N000000000000000</div>
<div class='t' style='left:4px;top:228.43px;font-size:9px;line-height:9px;color:#2d2d2d'>XXX.9.9 n0000000000000000</div>
<div class='t' style='left:4px;top:243.40px;font-size:9px;line-height:9px;color:#2d2d2d'>XXX.9.9 x000000000000</div>
<div class='t' style='left:4px;top:258.37px;font-size:9px;line-height:9px;color:#2d2d2d'>XXX.9.9.9 m000000000000000000</div>
<div class='t' style='left:4px;top:273.34px;font-size:9px;line-height:9px;color:#2d2d2d'>XXX.9.9.9 Ò00</div>
<div class='t' style='left:4px;top:288.31px;font-size:9px;line-height:9px;color:#2d2d2d'>XXX.9.9.9 Œ00</div>
<div class='t' style='left:4px;top:303.28px;font-size:9px;line-height:9px;color:#2d2d2d'>XXX.9.9.9 R00000000000000</div>
<div class='t' style='left:4px;top:318.25px;font-size:9px;line-height:9px;color:#2d2d2d'>XXX.9.9.9 Š00000</div>
<div class='t' style='left:4px;top:333.22px;font-size:9px;line-height:9px;color:#2d2d2d'>XXX.9.9.9 V0000000000000</div>
<div class='t' style='left:4px;top:348.19px;font-size:9px;line-height:9px;color:#2d2d2d'>XXX.9.99 f0000000000000000</div>
<div class='t' style='left:4px;top:363.16px;font-size:9px;line-height:9px;color:#2d2d2d'>XXX.9.99 g00000000000</div>
<div class='t' style='left:4px;top:378.13px;font-size:9px;line-height:9px;color:#2d2d2d'>XXX.9.99 j00000000000</div>
<div class='t' style='left:4px;top:393.10px;font-size:9px;line-height:9px;color:#2d2d2d'>XXX.9.99 l0000000000000000</div>
<div class='t' style='left:4px;top:408.07px;font-size:9px;line-height:9px;color:#2d2d2d'>XXX.9.99 r0000000000000000</div>
</div>
<div class='b' style='left:352px;top:160px;width:13px;height:414px;background:#f0f0f0'></div>
<div class='b' style='left:353px;top:173px;width:11px;height:262px;background:#cdcdcd'></div>
<svg class='b' style='left:355px;top:164px' width='7' height='4' viewBox='0 0 7 4'><path d='M0.5 3.5L3.5 0.5L6.5 3.5' fill='none' stroke='#999'/></svg>
<svg class='b' style='left:355px;top:566px' width='7' height='4' viewBox='0 0 7 4'><path d='M0.5 0.5L3.5 3.5L6.5 0.5' fill='none' stroke='#999'/></svg>
<div class='b' style='left:214px;top:574px;width:138px;height:13px;background:#f0f0f0'></div>
<div class='b' style='left:227px;top:575px;width:106px;height:12px;background:#cdcdcd'></div>
<svg class='b' style='left:219px;top:577px' width='4' height='7' viewBox='0 0 4 7'><path d='M3.5 0.5L0.8 3.5L3.5 6.5' fill='none' stroke='#999'/></svg>
<svg class='b' style='left:344px;top:577px' width='4' height='7' viewBox='0 0 4 7'><path d='M0.5 0.5L3.2 3.5L0.5 6.5' fill='none' stroke='#999'/></svg>
<div class='t' style='left:216px;top:594.88px;font-size:9px;line-height:9px;color:#333;'>Filter</div>
<div class='t' style='left:216px;top:614.58px;font-size:9px;line-height:9px;color:#333;'>Sort</div>
<div class='b' style='left:241px;top:590px;width:124px;height:16px;background:linear-gradient(#f2f2f2,#e6e6e6);border:1px solid #b8b8b8;box-sizing:border-box'></div>
<div class='t' style='left:246px;top:593.88px;font-size:9px;line-height:9px;color:#2d2d2d;'>All Entities</div>
<svg class='b' style='left:356px;top:596px' width='6' height='4' viewBox='0 0 6 4'><path d='M0.5 0.5L3 3L5.5 0.5' fill='none' stroke='#444'/></svg>
<div class='b' style='left:241px;top:610px;width:124px;height:16px;background:linear-gradient(#f2f2f2,#e6e6e6);border:1px solid #b8b8b8;box-sizing:border-box'></div>
<div class='t' style='left:246px;top:613.88px;font-size:9px;line-height:9px;color:#2d2d2d;'>Numeric</div>
<svg class='b' style='left:356px;top:616px' width='6' height='4' viewBox='0 0 6 4'><path d='M0.5 0.5L3 3L5.5 0.5' fill='none' stroke='#444'/></svg>
<div class='b' style='left:371px;top:121px;width:653px;height:17px;background:#2b579a'></div>
<div class='t' style='left:374px;top:125.38px;font-size:9px;line-height:9px;color:#fff;font-weight:bold;'>k0000000000000000 asPropertySheet</div>
<div class='b' style='left:373px;top:140px;width:650px;height:283px;background:#f7f7f7;border:1px solid #d6d6d6;box-sizing:border-box'></div>
<div class='t' style='left:375.5px;top:147.98px;font-size:9px;line-height:9px;color:#2d2d2d;'>Name</div>
<div class='b' style='left:485px;top:145px;width:516px;height:14px;background:#fff;border:1px solid #c6c6c6;box-sizing:border-box'></div>
<div class='t' style='left:488px;top:148.38px;font-size:9px;line-height:9px;color:#2d2d2d;'>k0000000000000000</div>
<div class='t' style='left:375.5px;top:168.58px;font-size:9px;line-height:9px;color:#2d2d2d;'>Number</div>
<div class='b' style='left:485px;top:166px;width:498px;height:14px;background:#fff;border:1px solid #c6c6c6;box-sizing:border-box'></div>
<div class='t' style='left:488px;top:169.38px;font-size:9px;line-height:9px;color:#2d2d2d;'>XXX.9</div>
<div class='b' style='left:378px;top:187px;width:102px;height:1.5px;background:#a8a8a8'></div>
<div class='t' style='left:375.5px;top:192.18px;font-size:9px;line-height:9px;color:#2d2d2d;'>Abbreviation</div>
<div class='b' style='left:485px;top:189px;width:516px;height:14px;background:#fff;border:1px solid #c6c6c6;box-sizing:border-box'></div>
<div class='t' style='left:488px;top:192.68px;font-size:9px;line-height:9px;color:#2d2d2d;'>n0000</div>
<div class='t' style='left:375.5px;top:212.68px;font-size:9px;line-height:9px;color:#2d2d2d;'>Description</div>
<div class='b' style='left:485px;top:210px;width:478px;height:131px;background:#fff;border:1px solid #c6c6c6;box-sizing:border-box'></div>
<div class='t' style='left:490px;top:213.88px;font-size:9px;line-height:9px;color:#2d2d2d;letter-spacing:-0.03px'>XXXXXXXXXXXXXXXXXXXXXXXXXXXXXXXXXXXXXXXXXXXXXXXXXXXXXXXXXXXXXXXXXXXXXXXXXXXXXX</div>
<div class='t' style='left:490px;top:225.38px;font-size:9px;line-height:9px;color:#2d2d2d;'>XXXXXXXXXX</div>
<svg class='b' style='left:986px;top:169.5px' width='13' height='13' viewBox='0 0 13 13'><circle cx='7' cy='6.5' r='5.3' fill='#e4ecf6' stroke='#8e9cb0' stroke-width='1'/><circle cx='7' cy='6.5' r='4' fill='#f4f8fc'/><path d='M7 3.5v3h2' stroke='#777' stroke-width='0.7' fill='none'/><path d='M1.7 6A5.3 5.3 0 0 1 9.5 1.8' stroke='#3a9a2a' stroke-width='2' fill='none'/><path d='M-0.3 5.2L3.7 5.2L1.7 8.4Z' fill='#3a9a2a'/></svg>
<svg class='b' style='left:986px;top:214px' width='13' height='13' viewBox='0 0 13 13'><circle cx='7' cy='6.5' r='5.3' fill='#e4ecf6' stroke='#8e9cb0' stroke-width='1'/><circle cx='7' cy='6.5' r='4' fill='#f4f8fc'/><path d='M7 3.5v3h2' stroke='#777' stroke-width='0.7' fill='none'/><path d='M1.7 6A5.3 5.3 0 0 1 9.5 1.8' stroke='#3a9a2a' stroke-width='2' fill='none'/><path d='M-0.3 5.2L3.7 5.2L1.7 8.4Z' fill='#3a9a2a'/></svg>
<svg class='b' style='left:968px;top:213px' width='12' height='12' viewBox='0 0 12 12'><path d='M1 11l1-3 7-7 2 2-7 7z' fill='#e8b840' stroke='#8a6a20' stroke-width='0.6'/><path d='M9 1l2 2' stroke='#d03030' stroke-width='2'/><path d='M1 11l1-3 2 2z' fill='#333'/></svg>
<div class='b' style='left:709px;top:342px;width:75px;height:2px;background:#8a8a8a'></div>
<div class='t' style='left:375.5px;top:348.78px;font-size:9px;line-height:9px;color:#2d2d2d;'>Doc. PUID</div>
<div class='b' style='left:485px;top:346px;width:516px;height:13px;background:#fff;border:1px solid #c6c6c6;box-sizing:border-box'></div>
<div class='t' style='left:375.5px;top:369.68px;font-size:9px;line-height:9px;color:#2d2d2d;'>Title</div>
<div class='b' style='left:485px;top:367px;width:516px;height:13px;background:#fff;border:1px solid #c6c6c6;box-sizing:border-box'></div>
<div class='t' style='left:375.5px;top:391.18px;font-size:9px;line-height:9px;color:#2d2d2d;'>Type</div>
<div class='b' style='left:485px;top:388px;width:516px;height:16px;background:linear-gradient(#f0f0f0,#e4e4e4);border:1px solid #c0c0c0;box-sizing:border-box'></div>
<div class='t' style='left:490px;top:392.88px;font-size:9px;line-height:9px;color:#2d2d2d;'>SW Element</div>
<svg class='b' style='left:993px;top:394px' width='6' height='4' viewBox='0 0 6 4'><path d='M0.5 0.5L3 3L5.5 0.5' fill='none' stroke='#444'/></svg>
<div class='t' style='left:375.5px;top:411.18px;font-size:9px;line-height:9px;color:#2d2d2d;'>Contract Line Item Number</div>
<div class='b' style='left:485px;top:409px;width:516px;height:13px;background:#fff;border:1px solid #c6c6c6;box-sizing:border-box'></div>
<div class='b' style='left:1007px;top:144px;width:13px;height:278px;background:#efefef'></div>
<div class='b' style='left:1007px;top:155px;width:13px;height:71px;background:#cdcdcd'></div>
<svg class='b' style='left:1010px;top:147px' width='7' height='4' viewBox='0 0 7 4'><path d='M0.5 3.5L3.5 0.5L6.5 3.5' fill='none' stroke='#999'/></svg>
<svg class='b' style='left:1010px;top:414px' width='7' height='4' viewBox='0 0 7 4'><path d='M0.5 0.5L3.5 3.5L6.5 0.5' fill='none' stroke='#999'/></svg>
<div class='b' style='left:372px;top:423px;width:651px;height:19px;background:#f7f7f7'></div>
<div class='b' style='left:373px;top:423px;width:650px;height:1px;background:#d8d8d8'></div>
<div class='b' style='left:374px;top:424px;width:49px;height:18px;background:#fcfcfc;border:1px solid #d0d0d0;border-bottom:none;box-sizing:border-box'></div>
<div class='b' style='left:423px;top:425px;width:49px;height:15px;background:linear-gradient(#f2f2f2,#e6e6e6);border:1px solid #cfcfcf;box-sizing:border-box'></div>
<div class='t' style='left:387.50px;width:120px;text-align:center;top:428.88px;font-size:9px;line-height:9px;color:#2d2d2d;'>Properties</div>
<div class='b' style='left:472px;top:425px;width:54px;height:15px;background:linear-gradient(#f2f2f2,#e6e6e6);border:1px solid #cfcfcf;box-sizing:border-box'></div>
<div class='t' style='left:439.00px;width:120px;text-align:center;top:428.88px;font-size:9px;line-height:9px;color:#2d2d2d;'>Parameters</div>
<div class='b' style='left:526px;top:425px;width:55px;height:15px;background:linear-gradient(#f2f2f2,#e6e6e6);border:1px solid #cfcfcf;box-sizing:border-box'></div>
<div class='t' style='left:493.50px;width:120px;text-align:center;top:428.88px;font-size:9px;line-height:9px;color:#2d2d2d;'>Diagnostics</div>
<div class='b' style='left:580px;top:425px;width:32px;height:15px;background:linear-gradient(#f2f2f2,#e6e6e6);border:1px solid #cfcfcf;box-sizing:border-box'></div>
<div class='t' style='left:536.00px;width:120px;text-align:center;top:428.88px;font-size:9px;line-height:9px;color:#2d2d2d;'>Views</div>
<div class='t' style='left:338.50px;width:120px;text-align:center;top:429.88px;font-size:9px;line-height:9px;color:#2d2d2d;'>Attributes</div>
<div class='b' style='left:372px;top:442px;width:651px;height:154px;background:#f0f0f0'></div>
<div class='b' style='left:373px;top:444px;width:235px;height:17px;background:#2b579a'></div>
<div class='t' style='left:376px;top:448.80px;font-size:8.5px;line-height:8.5px;color:#fff;font-weight:bold;'>Relationships</div>
<div class='b' style='left:373px;top:461px;width:235px;height:134px;background:#fff;border:1px solid #cfcfcf;border-top:none;box-sizing:border-box'></div>
<div class='b' style='left:374px;top:463px;width:221px;height:13px;background:#efefef'></div>
<div class='t' style='left:404px;top:467.38px;font-size:9px;line-height:9px;color:#2d2d2d;'>(all relationships)</div>
<div class='t' style='left:404px;top:481.58px;font-size:9px;line-height:9px;color:#2d2d2d;'>assigned to</div>
<div class='t' style='left:404px;top:495.78px;font-size:9px;line-height:9px;color:#2d2d2d;'>augmented by</div>
<div class='t' style='left:404px;top:509.98px;font-size:9px;line-height:9px;color:#2d2d2d;'>built from</div>
<div class='t' style='left:404px;top:524.18px;font-size:9px;line-height:9px;color:#2d2d2d;'>built in</div>
<div class='t' style='left:404px;top:538.38px;font-size:9px;line-height:9px;color:#2d2d2d;'>categorized by</div>
<div class='t' style='left:404px;top:552.58px;font-size:9px;line-height:9px;color:#2d2d2d;'>causes</div>
<div class='t' style='left:404px;top:566.78px;font-size:9px;line-height:9px;color:#2d2d2d;'>connected to</div>
<div class='t' style='left:404px;top:580.98px;font-size:9px;line-height:9px;color:#2d2d2d;'>constrained by</div>
<svg class='b' style='left:376px;top:466.0px' width='11' height='12' viewBox='0 0 11 12'><path d='M0.5 0.5h8.5v6h1.5a1 1 0 0 1 0 0v4.5h-10z' fill='url(#fg)' stroke='#e6bb78'/></svg>
<svg class='b' style='left:376px;top:522.8px' width='11' height='12' viewBox='0 0 11 12'><path d='M0.5 0.5h8.5v6h1.5a1 1 0 0 1 0 0v4.5h-10z' fill='url(#fg)' stroke='#e6bb78'/></svg>
<svg class='b' style='left:376px;top:565.4px' width='11' height='12' viewBox='0 0 11 12'><path d='M0.5 0.5h8.5v6h1.5a1 1 0 0 1 0 0v4.5h-10z' fill='url(#fg)' stroke='#e6bb78'/></svg>
<svg class='b' style='left:393px;top:510.6px' width='7' height='8' viewBox='0 0 7 8'><path d='M3.5 0v7M0.8 4.2L3.5 7L6.2 4.2' fill='none' stroke='#444' stroke-width='1.1'/></svg>
<svg class='b' style='left:393px;top:523.8px' width='7' height='8' viewBox='0 0 7 8'><path d='M3.5 8V1M0.8 3.8L3.5 1L6.2 3.8' fill='none' stroke='#444' stroke-width='1.1'/></svg>
<div class='b' style='left:595px;top:462px;width:12px;height:132px;background:#f0f0f0'></div>
<div class='b' style='left:596px;top:475px;width:10px;height:29px;background:#cdcdcd'></div>
<svg class='b' style='left:598px;top:466px' width='7' height='4' viewBox='0 0 7 4'><path d='M0.5 3.5L3.5 0.5L6.5 3.5' fill='none' stroke='#999'/></svg>
<svg class='b' style='left:598px;top:586px' width='7' height='4' viewBox='0 0 7 4'><path d='M0.5 0.5L3.5 3.5L6.5 0.5' fill='none' stroke='#999'/></svg>
<div class='b' style='left:611px;top:444px;width:411px;height:17px;background:#2b579a'></div>
<div class='t' style='left:614px;top:449.38px;font-size:9px;line-height:9px;color:#fff;font-weight:bold;'>Targets &amp; Attributes</div>
<div class='b' style='left:611px;top:461px;width:411px;height:135px;background:#f7f7f7;border-left:1px solid #cfcfcf;border-right:1px solid #cfcfcf;box-sizing:border-box'></div>
<div class='b' style='left:612px;top:461px;width:409px;height:114px;background:#fff'></div>
<svg class='b' style='left:620px;top:466.5px' width='4' height='7' viewBox='0 0 4 7'><path d='M0.5 0.5v6L3.5 3.5z' fill='none' stroke='#888' stroke-width='0.8'/></svg>
<div class='t' style='left:628px;top:466.38px;font-size:9px;line-height:9px;color:#2d2d2d;'>built in Component XXX q0000000000000000</div>
<svg class='b' style='left:620px;top:479.95px' width='4' height='7' viewBox='0 0 4 7'><path d='M0.5 0.5v6L3.5 3.5z' fill='none' stroke='#888' stroke-width='0.8'/></svg>
<div class='t' style='left:628px;top:479.83px;font-size:9px;line-height:9px;color:#2d2d2d;'>connected to Link X.9.9 P000000000000000000000000</div>
<svg class='b' style='left:620px;top:493.4px' width='4' height='7' viewBox='0 0 4 7'><path d='M0.5 0.5v6L3.5 3.5z' fill='none' stroke='#888' stroke-width='0.8'/></svg>
<div class='t' style='left:628px;top:493.28px;font-size:9px;line-height:9px;color:#2d2d2d;'>exhibits State X.9.9 H000000000000000000000000000000</div>
<div class='t' style='left:628px;top:506.73px;font-size:9px;line-height:9px;color:#2d2d2d;'>packaged by Package&nbsp; p0000000000000000</div>
<svg class='b' style='left:620px;top:520.3px' width='4' height='7' viewBox='0 0 4 7'><path d='M0.5 0.5v6L3.5 3.5z' fill='none' stroke='#888' stroke-width='0.8'/></svg>
<div class='t' style='left:628px;top:520.18px;font-size:9px;line-height:9px;color:#2d2d2d;'>parameter used in ConstraintDefinition XXXX.9.9 k000000000</div>
<svg class='b' style='left:620px;top:533.75px' width='4' height='7' viewBox='0 0 4 7'><path d='M0.5 0.5v6L3.5 3.5z' fill='none' stroke='#888' stroke-width='0.8'/></svg>
<div class='t' style='left:628px;top:533.63px;font-size:9px;line-height:9px;color:#2d2d2d;'>performs Function XXXX.9 P000000000000000000000</div>
<svg class='b' style='left:620px;top:547.2px' width='4' height='7' viewBox='0 0 4 7'><path d='M0.5 0.5v6L3.5 3.5z' fill='none' stroke='#888' stroke-width='0.8'/></svg>
<div class='t' style='left:628px;top:547.08px;font-size:9px;line-height:9px;color:#2d2d2d;'>performs Function XXXX.9.9 µ000000000000000</div>
<svg class='b' style='left:620px;top:560.65px' width='4' height='7' viewBox='0 0 4 7'><path d='M0.5 0.5v6L3.5 3.5z' fill='none' stroke='#888' stroke-width='0.8'/></svg>
<div class='t' style='left:628px;top:560.53px;font-size:9px;line-height:9px;color:#2d2d2d;'>performs Function XXXX.9.9 ½0000000000000</div>
<div class='b' style='left:1009px;top:462px;width:12px;height:112px;background:#f0f0f0'></div>
<div class='b' style='left:1010px;top:475px;width:10px;height:63px;background:#cdcdcd'></div>
<svg class='b' style='left:1012px;top:466px' width='7' height='4' viewBox='0 0 7 4'><path d='M0.5 3.5L3.5 0.5L6.5 3.5' fill='none' stroke='#999'/></svg>
<svg class='b' style='left:1012px;top:566px' width='7' height='4' viewBox='0 0 7 4'><path d='M0.5 0.5L3.5 3.5L6.5 0.5' fill='none' stroke='#999'/></svg>
<div class='t' style='left:614px;top:582.68px;font-size:9px;line-height:9px;color:#333;'>Sort</div>
<div class='b' style='left:637px;top:577px;width:385px;height:18px;background:linear-gradient(#f2f2f2,#e6e6e6);border:1px solid #c0c0c0;box-sizing:border-box'></div>
<div class='t' style='left:641px;top:581.88px;font-size:9px;line-height:9px;color:#2d2d2d;'>Numeric by class</div>
<svg class='b' style='left:1011px;top:584px' width='6' height='4' viewBox='0 0 6 4'><path d='M0.5 0.5L3 3L5.5 0.5' fill='none' stroke='#444'/></svg>
<div class='b' style='left:451px;top:596.5px;width:61px;height:15.5px;background:linear-gradient(#f7f7f7,#e5e5e5);border:1px solid #cdcdcd;box-sizing:border-box;border-bottom:none'></div>
<svg class='b' style='left:461px;top:599px' width='12' height='11' viewBox='0 0 12 11'><rect x='0.5' y='0.5' width='4' height='3.5' fill='#f2cf5a' stroke='#b08a30' stroke-width='0.7'/><rect x='7.5' y='0.5' width='4' height='3.5' fill='#f2cf5a' stroke='#b08a30' stroke-width='0.7'/><rect x='0.5' y='7' width='4' height='3.5' fill='#f2cf5a' stroke='#b08a30' stroke-width='0.7'/><rect x='7.5' y='7' width='4' height='3.5' fill='#f2cf5a' stroke='#b08a30' stroke-width='0.7'/><path d='M4.5 2h3M2.5 4v3M9.5 4v3M4.5 5.5l3 0' stroke='#5a82c8' stroke-width='0.8'/></svg>
<div class='t' style='left:474px;top:601.52px;font-size:8.6px;line-height:8.6px;color:#2d2d2d;'>Spider</div>
<div class='b' style='left:512px;top:596.5px;width:74px;height:15.5px;background:linear-gradient(#f7f7f7,#e5e5e5);border:1px solid #cdcdcd;box-sizing:border-box;border-bottom:none'></div>
<svg class='b' style='left:524px;top:599px' width='10' height='11' viewBox='0 0 10 11'><rect x='3' y='0.5' width='4' height='3.5' fill='#f2cf5a' stroke='#b08a30' stroke-width='0.7'/><rect x='0.5' y='7' width='4' height='3.5' fill='#f2cf5a' stroke='#b08a30' stroke-width='0.7'/><rect x='5.5' y='7' width='4' height='3.5' fill='#f2cf5a' stroke='#b08a30' stroke-width='0.7'/><path d='M5 4v2M2.5 6h5v1M2.5 6v1' stroke='#5a82c8' stroke-width='0.8' fill='none'/></svg>
<div class='t' style='left:536px;top:601.52px;font-size:8.6px;line-height:8.6px;color:#2d2d2d;'>Hierarchy</div>
<div class='b' style='left:586px;top:596.5px;width:55px;height:15.5px;background:linear-gradient(#f7f7f7,#e5e5e5);border:1px solid #cdcdcd;box-sizing:border-box;border-bottom:none'></div>
<svg class='b' style='left:597px;top:599px' width='11' height='11' viewBox='0 0 11 11'><rect x='2' y='0.5' width='7' height='3.5' fill='#f2cf5a' stroke='#b08a30' stroke-width='0.7'/><rect x='0.5' y='7' width='4' height='3.5' fill='#f2cf5a' stroke='#b08a30' stroke-width='0.7'/><rect x='6.5' y='7' width='4' height='3.5' fill='#f2cf5a' stroke='#b08a30' stroke-width='0.7'/><path d='M5.5 4v3M2.5 7V5.5h6V7' stroke='#5a82c8' stroke-width='0.8' fill='none'/></svg>
<div class='t' style='left:611px;top:601.52px;font-size:8.6px;line-height:8.6px;color:#2d2d2d;'>BDD</div>
<div class='b' style='left:641px;top:596.5px;width:98px;height:15.5px;background:linear-gradient(#f7f7f7,#e5e5e5);border:1px solid #cdcdcd;box-sizing:border-box;border-bottom:none'></div>
<svg class='b' style='left:652px;top:599px' width='12' height='12' viewBox='0 0 12 12'><path d='M3 4V2.5a3 3 0 0 1 6 0V4' fill='none' stroke='#b08a30'/><rect x='1.5' y='4' width='9' height='4' fill='#f2cf5a' stroke='#b08a30' stroke-width='0.7'/><rect x='0.5' y='8.5' width='4' height='3' fill='#f2cf5a' stroke='#b08a30' stroke-width='0.7'/><rect x='7.5' y='8.5' width='4' height='3' fill='#f2cf5a' stroke='#b08a30' stroke-width='0.7'/></svg>
<div class='t' style='left:665px;top:601.52px;font-size:8.6px;line-height:8.6px;color:#2d2d2d;'>Constraint BDD</div>
<div class='b' style='left:738px;top:596.5px;width:83px;height:15.5px;background:linear-gradient(#f7f7f7,#e5e5e5);border:1px solid #cdcdcd;box-sizing:border-box;border-bottom:none'></div>
<svg class='b' style='left:748px;top:599px' width='12' height='11' viewBox='0 0 12 11'><rect x='0.5' y='0.5' width='11' height='10' fill='#eef2f8' stroke='#5a82c8' stroke-width='0.8'/><rect x='1.5' y='1.5' width='4' height='3.5' fill='#f2cf5a' stroke='#b08a30' stroke-width='0.6'/><rect x='6.5' y='6' width='4' height='3.5' fill='#f2cf5a' stroke='#b08a30' stroke-width='0.6'/><text x='0' y='11' font-size='6' font-weight='bold' fill='#d02020' font-family='Liberation Sans'>P</text></svg>
<div class='t' style='left:763px;top:601.52px;font-size:8.6px;line-height:8.6px;color:#2d2d2d;'>Physical N2</div>
<div class='b' style='left:820px;top:596.5px;width:93px;height:15.5px;background:linear-gradient(#f7f7f7,#e5e5e5);border:1px solid #cdcdcd;box-sizing:border-box;border-bottom:none'></div>
<svg class='b' style='left:831px;top:599px' width='12' height='11' viewBox='0 0 12 11'><rect x='0.5' y='0.5' width='4' height='3.5' fill='#f2cf5a' stroke='#b08a30' stroke-width='0.7'/><rect x='7.5' y='0.5' width='4' height='3.5' fill='#f2cf5a' stroke='#b08a30' stroke-width='0.7'/><rect x='0.5' y='7' width='4' height='3.5' fill='#f2cf5a' stroke='#b08a30' stroke-width='0.7'/><rect x='7.5' y='7' width='4' height='3.5' fill='#f2cf5a' stroke='#b08a30' stroke-width='0.7'/><path d='M4.5 2h3M2.5 4v3M9.5 4v3M4.5 5.5l3 0' stroke='#5a82c8' stroke-width='0.8'/></svg>
<div class='t' style='left:845px;top:601.52px;font-size:8.6px;line-height:8.6px;color:#2d2d2d;'>Physical Block</div>
<div class='b' style='left:912px;top:596.5px;width:111px;height:15.5px;background:linear-gradient(#f7f7f7,#e5e5e5);border:1px solid #cdcdcd;box-sizing:border-box;border-bottom:none'></div>
<svg class='b' style='left:923px;top:599px' width='12' height='11' viewBox='0 0 12 11'><rect x='0.5' y='3' width='6' height='5' fill='#f2cf5a' stroke='#b08a30' stroke-width='0.7'/><rect x='6.5' y='0.5' width='5' height='4' fill='#f2cf5a' stroke='#b08a30' stroke-width='0.7'/><rect x='6.5' y='6.5' width='5' height='4' fill='#f2cf5a' stroke='#b08a30' stroke-width='0.7'/><path d='M3 3V2h3.5M3 8v1h3.5' stroke='#5a82c8' fill='none'/></svg>
<div class='t' style='left:937px;top:601.52px;font-size:8.6px;line-height:8.6px;color:#2d2d2d;'>Flow Internal Block</div>
<div class='b' style='left:373px;top:611.5px;width:70px;height:16px;background:linear-gradient(#f7f7f7,#e5e5e5);border:1px solid #cdcdcd;box-sizing:border-box;'></div>
<svg class='b' style='left:391px;top:613.5px' width='12' height='11' viewBox='0 0 12 11'><rect x='0.5' y='0.5' width='4' height='3.5' fill='#f2cf5a' stroke='#b08a30' stroke-width='0.7'/><rect x='7.5' y='0.5' width='4' height='3.5' fill='#f2cf5a' stroke='#b08a30' stroke-width='0.7'/><rect x='0.5' y='7' width='4' height='3.5' fill='#f2cf5a' stroke='#b08a30' stroke-width='0.7'/><rect x='7.5' y='7' width='4' height='3.5' fill='#f2cf5a' stroke='#b08a30' stroke-width='0.7'/><path d='M4.5 2h3M2.5 4v3M9.5 4v3M4.5 5.5l3 0' stroke='#5a82c8' stroke-width='0.8'/></svg>
<div class='t' style='left:404px;top:616.52px;font-size:8.6px;line-height:8.6px;color:#2d2d2d;'>Class</div>
<div class='b' style='left:443px;top:611.5px;width:112px;height:16px;background:linear-gradient(#f7f7f7,#e5e5e5);border:1px solid #cdcdcd;box-sizing:border-box;'></div>
<svg class='b' style='left:461px;top:613.5px' width='12' height='11' viewBox='0 0 12 11'><circle cx='6' cy='5.5' r='4.5' fill='#dfe9f6' stroke='#5a82c8' stroke-width='0.9'/><rect x='0.5' y='0.5' width='4' height='3' fill='#f2cf5a' stroke='#b08a30' stroke-width='0.7'/><rect x='7.5' y='7.5' width='4' height='3' fill='#f2cf5a' stroke='#b08a30' stroke-width='0.7'/></svg>
<div class='t' style='left:475px;top:616.52px;font-size:8.6px;line-height:8.6px;color:#2d2d2d;'>State Transition</div>
<div class='b' style='left:555px;top:611.5px;width:76px;height:16px;background:linear-gradient(#f7f7f7,#e5e5e5);border:1px solid #cdcdcd;box-sizing:border-box;'></div>
<svg class='b' style='left:573px;top:613.5px' width='12' height='11' viewBox='0 0 12 11'><path d='M0 5.5h12M6 0v11' stroke='#5a82c8' stroke-width='0.9'/><rect x='3' y='3' width='6' height='5' fill='#f4b0c0' stroke='#c03050' stroke-width='0.8'/><rect x='0' y='4' width='2.5' height='3' fill='#f2cf5a'/><rect x='9.5' y='4' width='2.5' height='3' fill='#f2cf5a'/></svg>
<div class='t' style='left:586px;top:616.52px;font-size:8.6px;line-height:8.6px;color:#2d2d2d;'>EFFBD</div>
<div class='b' style='left:630px;top:611.5px;width:80px;height:16px;background:linear-gradient(#f7f7f7,#e5e5e5);border:1px solid #cdcdcd;box-sizing:border-box;'></div>
<svg class='b' style='left:653px;top:613.5px' width='7' height='11' viewBox='0 0 7 11'><rect x='0.5' y='0.5' width='6' height='3.5' fill='#f2cf5a' stroke='#b08a30' stroke-width='0.7'/><path d='M3.5 4v3' stroke='#5a82c8'/><rect x='1.5' y='7' width='5' height='3.5' fill='#f2cf5a' stroke='#b08a30' stroke-width='0.7'/></svg>
<div class='t' style='left:661px;top:616.52px;font-size:8.6px;line-height:8.6px;color:#2d2d2d;'>Activity</div>
<div class='b' style='left:709px;top:611.5px;width:90px;height:16px;background:linear-gradient(#f7f7f7,#e5e5e5);border:1px solid #cdcdcd;box-sizing:border-box;'></div>
<svg class='b' style='left:727px;top:613.5px' width='13' height='11' viewBox='0 0 13 11'><rect x='0.5' y='0.5' width='4' height='3' fill='#f2cf5a' stroke='#b08a30' stroke-width='0.7'/><rect x='8.5' y='0.5' width='4' height='3' fill='#f2cf5a' stroke='#b08a30' stroke-width='0.7'/><path d='M2.5 3.5v7M10.5 3.5v7' stroke='#5a82c8' stroke-dasharray='1 1'/><path d='M2.5 6h8M2.5 9h8' stroke='#555' stroke-width='0.8'/></svg>
<div class='t' style='left:741px;top:616.52px;font-size:8.6px;line-height:8.6px;color:#2d2d2d;'>Sequence</div>
<div class='b' style='left:798px;top:611.5px;width:63px;height:16px;background:linear-gradient(#f7f7f7,#e5e5e5);border:1px solid #cdcdcd;box-sizing:border-box;'></div>
<svg class='b' style='left:818px;top:613.5px' width='12' height='11' viewBox='0 0 12 11'><rect x='0.5' y='0.5' width='11' height='10' fill='#eef2f8' stroke='#5a82c8' stroke-width='0.8'/><rect x='1.5' y='1.5' width='4' height='3.5' fill='#f2cf5a' stroke='#b08a30' stroke-width='0.6'/><rect x='6.5' y='6' width='4' height='3.5' fill='#f2cf5a' stroke='#b08a30' stroke-width='0.6'/></svg>
<div class='t' style='left:830px;top:616.52px;font-size:8.6px;line-height:8.6px;color:#2d2d2d;'>N2</div>
<div class='b' style='left:860px;top:611.5px;width:74px;height:16px;background:linear-gradient(#f7f7f7,#e5e5e5);border:1px solid #cdcdcd;box-sizing:border-box;'></div>
<svg class='b' style='left:878px;top:613.5px' width='13' height='12' viewBox='0 0 13 12'><rect x='2.5' y='2.5' width='9' height='8' fill='#eef2f8' stroke='#5a82c8' stroke-width='0.8'/><path d='M0 5h3M11 7h2M6 0v3' stroke='#5a82c8'/><rect x='4' y='4' width='5' height='4' fill='#f2cf5a' stroke='#b08a30' stroke-width='0.6'/></svg>
<div class='t' style='left:893px;top:616.52px;font-size:8.6px;line-height:8.6px;color:#2d2d2d;'>IDEF0</div>
<div class='b' style='left:933px;top:611.5px;width:90px;height:16px;background:linear-gradient(#f7f7f7,#e5e5e5);border:1px solid #cdcdcd;box-sizing:border-box;'></div>
<svg class='b' style='left:950px;top:613.5px' width='13' height='12' viewBox='0 0 13 12'><rect x='2.5' y='2.5' width='9' height='8' fill='#eef2f8' stroke='#5a82c8' stroke-width='0.8'/><path d='M0 5h3M11 7h2M6 0v3' stroke='#5a82c8'/><rect x='4' y='4' width='5' height='4' fill='#f2cf5a' stroke='#b08a30' stroke-width='0.6'/><text x='0' y='12' font-size='5.5' font-weight='bold' fill='#d02020' font-family='Liberation Sans'>A0</text></svg>
<div class='t' style='left:965px;top:616.52px;font-size:8.6px;line-height:8.6px;color:#2d2d2d;'>IDEF0 A-0</div>
<div class='b' style='left:372px;top:596px;width:79px;height:17px;background:#fbfbfb;border:1px solid #cdcdcd;border-bottom:none;box-sizing:border-box'></div>
<svg class='b' style='left:384px;top:598px' width='13' height='12' viewBox='0 0 13 12'><rect x='0.5' y='2.5' width='11' height='9' fill='#e6ecf6' stroke='#8a9ab8' stroke-width='0.8'/><rect x='1' y='3' width='3' height='8' fill='#c8d4ea'/><path d='M6 1l3-1 3 2-2 2z' fill='#3a9a3a'/><rect x='7' y='0' width='5' height='3' fill='#f2cf5a'/></svg>
<div class='t' style='left:397px;top:603.22px;font-size:8.6px;line-height:8.6px;color:#2d2d2d;'>Properties</div>
<div class='t' style='left:3px;top:634.55px;font-size:8.8px;line-height:8.8px;color:#2d2d2d;'>Repository: Local</div>
<div class='b' style='left:74px;top:632px;width:1px;height:11px;background:#b0b0b0'></div>
<div class='t' style='left:78px;top:634.55px;font-size:8.8px;line-height:8.8px;color:#2d2d2d;'>Project: Obfuscated Drone Design</div>
<div class='b' style='left:216px;top:632px;width:1px;height:11px;background:#b0b0b0'></div>
<div class='t' style='left:220px;top:634.55px;font-size:8.8px;line-height:8.8px;color:#2d2d2d;'>Username: Administrator</div>
<div class='b' style='left:323px;top:632px;width:1px;height:11px;background:#b0b0b0'></div>
<div class='t' style='left:328px;top:634.55px;font-size:8.8px;line-height:8.8px;color:#2d2d2d;'>Authentication Mode: GENESYS</div>
</body></html>
